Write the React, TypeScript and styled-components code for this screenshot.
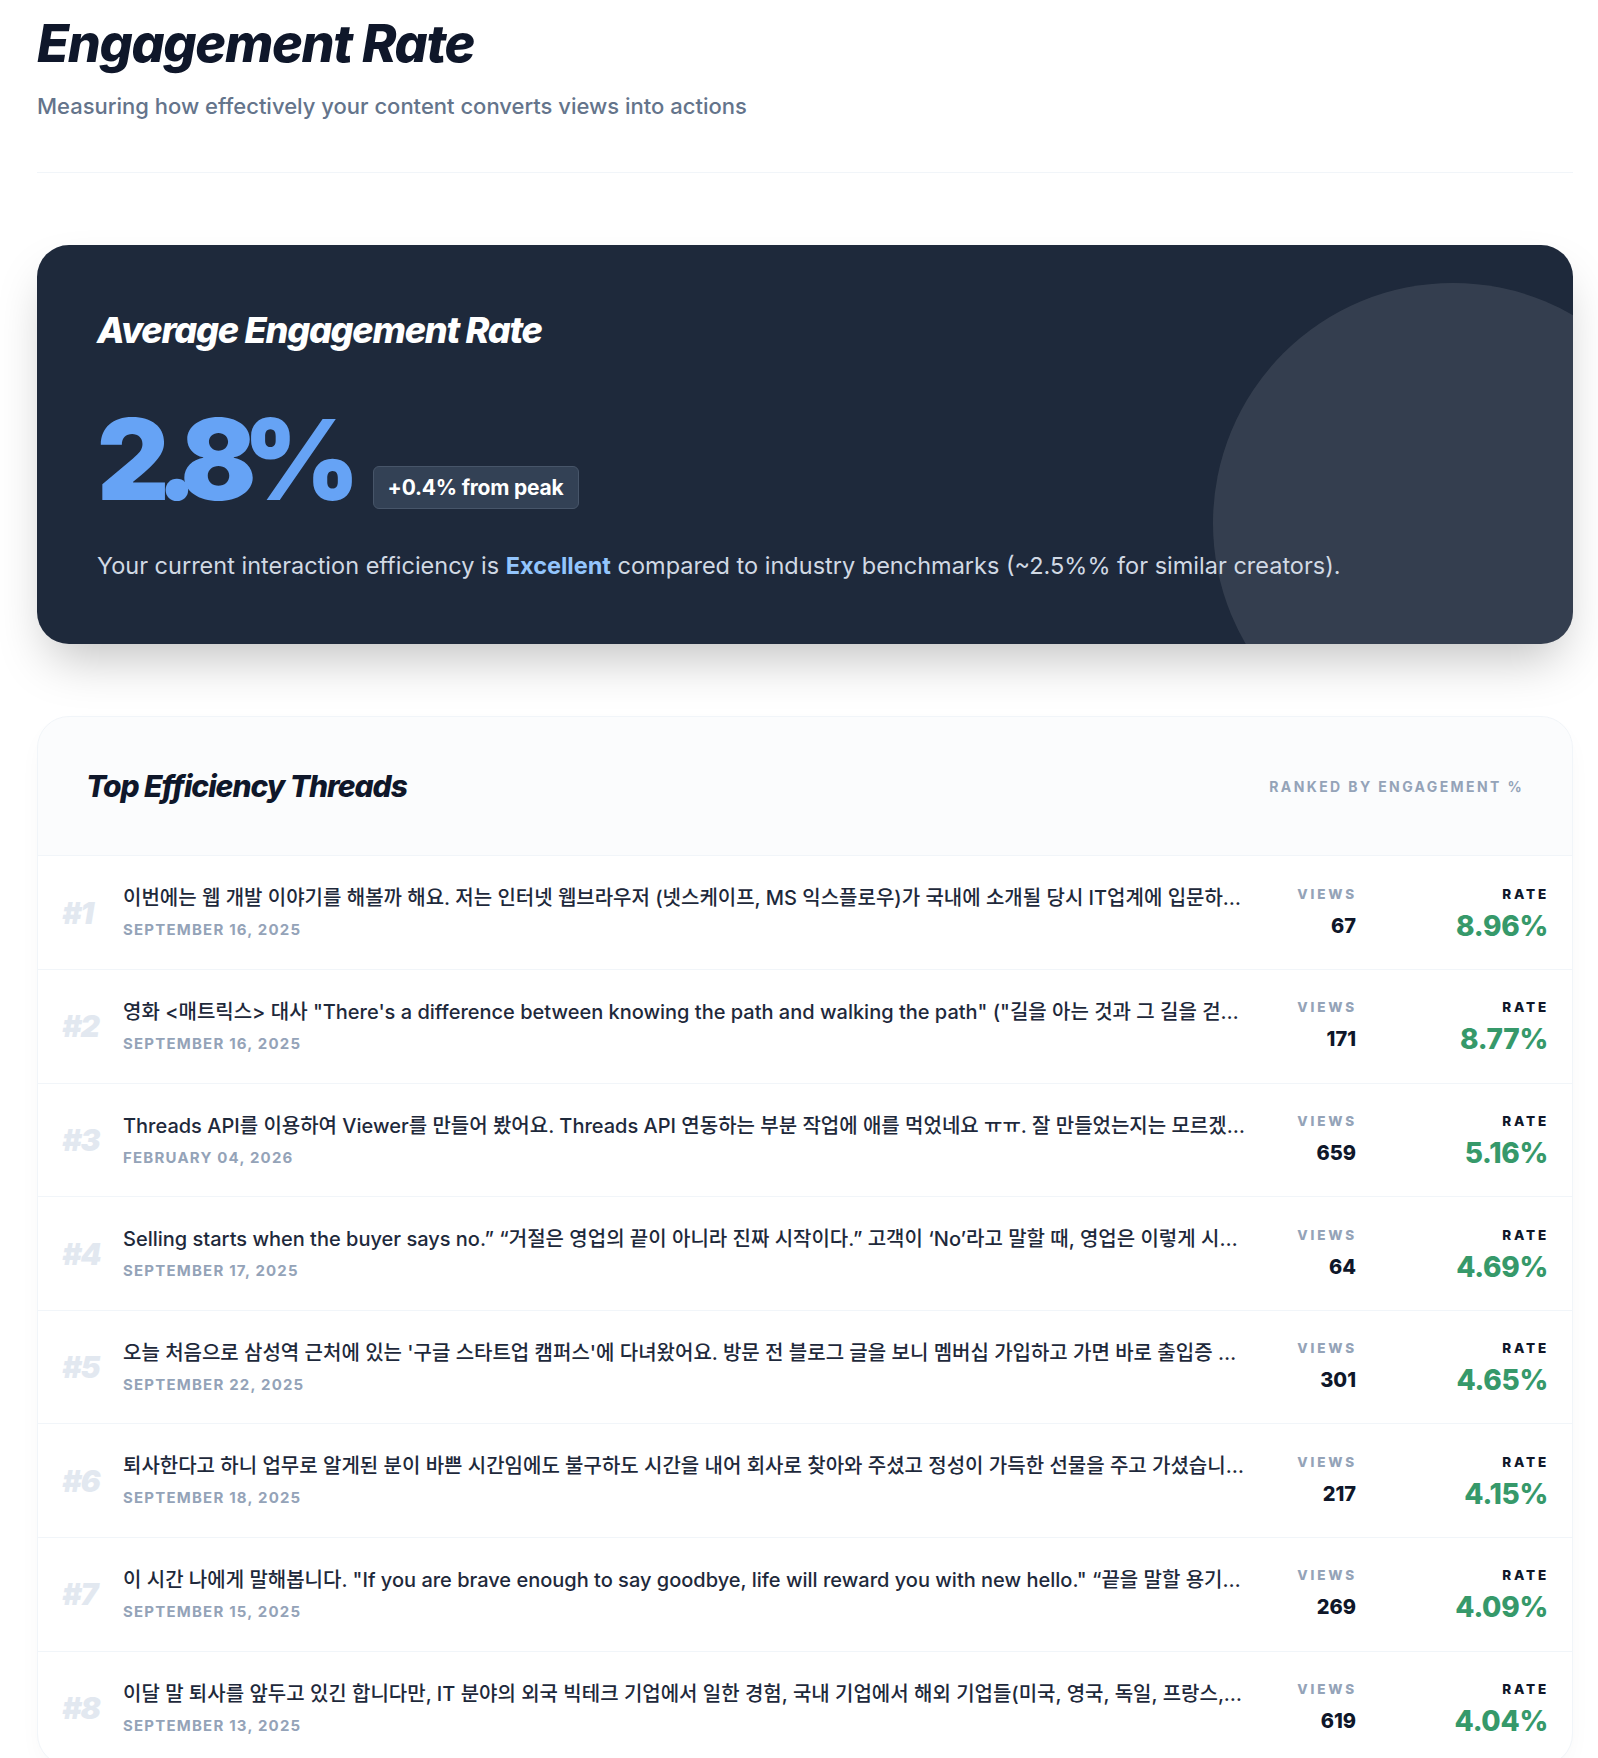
import React from "react";
import styled, { createGlobalStyle } from "styled-components";

const GlobalStyle = createGlobalStyle`
  html, body {
    margin: 0;
    padding: 0;
    background: #ffffff;
  }
  body {
    font-family: Inter, "Noto Sans CJK KR", "Noto Sans", sans-serif;
    color: #0f172a;
    -webkit-font-smoothing: antialiased;
  }
  * { box-sizing: border-box; }
`;

const Page = styled.div`
  padding: 13px 25px 0 37px;
`;

const Header = styled.header`
  padding-bottom: 49px;
  border-bottom: 1px solid #f1f5f9;
`;

const Title = styled.h1`
  margin: 0;
  font-size: 52px;
  line-height: 1.2;
  font-weight: 800;
  font-style: italic;
  letter-spacing: -0.025em;
  color: #0f172a;
`;

const Subtitle = styled.p`
  margin: 15px 0 0;
  font-size: 22px;
  line-height: 1.5;
  font-weight: 500;
  color: #64748b;
`;

const HeroCard = styled.section`
  position: relative;
  overflow: hidden;
  margin-top: 72px;
  padding: 64px 60px 62px;
  border-radius: 32px;
  background: #1e293b;
  box-shadow: 0 25px 50px -12px rgba(0, 0, 0, 0.25);
`;

const Glow = styled.div`
  position: absolute;
  top: 38px;
  right: -120px;
  width: 480px;
  height: 480px;
  border-radius: 50%;
  background: rgba(255, 255, 255, 0.1);
  pointer-events: none;
`;

const HeroTitle = styled.h2`
  position: relative;
  margin: 0;
  font-size: 36px;
  line-height: 1.2;
  font-weight: 800;
  font-style: italic;
  letter-spacing: -0.035em;
  color: #ffffff;
`;

const MetricRow = styled.div`
  position: relative;
  display: flex;
  align-items: flex-end;
  gap: 26px;
  margin-top: 50px;
`;

const BigValue = styled.span`
  font-size: 112px;
  line-height: 1;
  font-weight: 900;
  letter-spacing: -0.12em;
  color: #66a3f5;
`;

const Badge = styled.span`
  display: inline-block;
  margin-bottom: 6px;
  padding: 7px 14px;
  border: 1px solid #475569;
  border-radius: 6px;
  background: #334155;
  font-size: 21px;
  line-height: 27px;
  font-weight: 700;
  letter-spacing: -0.01em;
  color: #ffffff;
`;

const Description = styled.p`
  position: relative;
  margin: 35px 0 0;
  font-size: 23.5px;
  line-height: 1.4;
  font-weight: 400;
  color: #d1d9e4;
`;

const Highlight = styled.strong`
  font-weight: 700;
  color: #93c5fd;
`;

const ListCard = styled.section`
  margin-top: 72px;
  border: 1px solid #f1f5f9;
  border-radius: 32px;
  background: #ffffff;
  overflow: hidden;
  box-shadow: 0 10px 30px -10px rgba(15, 23, 42, 0.06);
`;

const ListHeader = styled.div`
  display: flex;
  align-items: center;
  justify-content: space-between;
  padding: 48px;
  background: rgba(248, 250, 252, 0.5);
  border-bottom: 1px solid #f1f5f9;
`;

const ListTitle = styled.h3`
  margin: 0;
  font-size: 30px;
  line-height: 42px;
  font-weight: 800;
  font-style: italic;
  letter-spacing: -0.035em;
  color: #0f172a;
`;

const Caption = styled.span`
  font-size: 14px;
  font-weight: 700;
  letter-spacing: 0.17em;
  text-transform: uppercase;
  color: #94a3b8;
`;

const Row = styled.div`
  display: grid;
  grid-template-columns: 37px minmax(0, 1fr) 85px 168px;
  column-gap: 24px;
  align-items: center;
  padding: 28px 24px;
  border-bottom: 1px solid #f1f5f9;
`;

const Rank = styled.span`
  font-size: 30px;
  line-height: 1;
  font-weight: 900;
  font-style: italic;
  letter-spacing: -0.05em;
  color: #e2e8f0;
  white-space: nowrap;
`;

const PostBody = styled.div`
  min-width: 0;
  display: flex;
  flex-direction: column;
  gap: 7px;
`;

const PostText = styled.div`
  font-size: 20px;
  line-height: 28px;
  font-weight: 500;
  color: #1e293b;
  white-space: nowrap;
  overflow: hidden;
  text-overflow: ellipsis;
`;

const PostDate = styled.div`
  font-size: 15px;
  line-height: 21.6px;
  font-weight: 700;
  letter-spacing: 0.08em;
  text-transform: uppercase;
  color: #94a3b8;
`;

const Stat = styled.div`
  display: flex;
  flex-direction: column;
  align-items: flex-end;
  gap: 8px;
  text-align: right;
`;

const StatLabel = styled.span<{ $dark?: boolean }>`
  font-size: 13.5px;
  line-height: 18px;
  font-weight: 800;
  letter-spacing: 0.21em;
  margin-right: -0.08em;
  text-transform: uppercase;
  color: ${(p) => (p.$dark ? "#0f172a" : "#94a3b8")};
`;

const StatValue = styled.span<{ $rate?: boolean }>`
  font-size: ${(p) => (p.$rate ? "28px" : "20px")};
  line-height: 30px;
  font-weight: 800;
  letter-spacing: ${(p) => (p.$rate ? "-0.01em" : "0")};
  color: ${(p) => (p.$rate ? "#36996a" : "#0f172a")};
`;

type Thread = {
  text: string;
  date: string;
  views: number;
  rate: string;
};

const threads: Thread[] = [
  {
    text: "이번에는 웹 개발 이야기를 해볼까 해요. 저는 인터넷 웹브라우저 (넷스케이프, MS 익스플로우)가 국내에 소개될 당시 IT업계에 입문하였고, 그 이후로 웹 개발의 변화를 직접 경험해왔습니다.",
    date: "September 16, 2025",
    views: 67,
    rate: "8.96%",
  },
  {
    text: "영화 <매트릭스> 대사 \"There's a difference between knowing the path and walking the path\" (\"길을 아는 것과 그 길을 걷는 것은 다르다\")",
    date: "September 16, 2025",
    views: 171,
    rate: "8.77%",
  },
  {
    text: "Threads API를 이용하여 Viewer를 만들어 봤어요. Threads API 연동하는 부분 작업에 애를 먹었네요 ㅠㅠ. 잘 만들었는지는 모르겠지만 한번 사용해 보세요.",
    date: "February 04, 2026",
    views: 659,
    rate: "5.16%",
  },
  {
    text: "Selling starts when the buyer says no.” “거절은 영업의 끝이 아니라 진짜 시작이다.” 고객이 ‘No’라고 말할 때, 영업은 이렇게 시작됩니다.",
    date: "September 17, 2025",
    views: 64,
    rate: "4.69%",
  },
  {
    text: "오늘 처음으로 삼성역 근처에 있는 '구글 스타트업 캠퍼스'에 다녀왔어요. 방문 전 블로그 글을 보니 멤버십 가입하고 가면 바로 출입증 만들어 준다고 해서 가입하고 갔어요.",
    date: "September 22, 2025",
    views: 301,
    rate: "4.65%",
  },
  {
    text: "퇴사한다고 하니 업무로 알게된 분이 바쁜 시간임에도 불구하도 시간을 내어 회사로 찾아와 주셨고 정성이 가득한 선물을 주고 가셨습니다. 정말 감사합니다.",
    date: "September 18, 2025",
    views: 217,
    rate: "4.15%",
  },
  {
    text: "이 시간 나에게 말해봅니다. \"If you are brave enough to say goodbye, life will reward you with new hello.\" “끝을 말할 용기가 있다면, 삶은 새로운 시작으로 보답할 것이다.”",
    date: "September 15, 2025",
    views: 269,
    rate: "4.09%",
  },
  {
    text: "이달 말 퇴사를 앞두고 있긴 합니다만, IT 분야의 외국 빅테크 기업에서 일한 경험, 국내 기업에서 해외 기업들(미국, 영국, 독일, 프랑스, 일본 등)과 함께 일한 경험을 나눠보려 합니다.",
    date: "September 13, 2025",
    views: 619,
    rate: "4.04%",
  },
];

export default function App() {
  return (
    <>
      <GlobalStyle />
      <Page>
        <Header>
          <Title>Engagement Rate</Title>
          <Subtitle>Measuring how effectively your content converts views into actions</Subtitle>
        </Header>

        <HeroCard>
          <Glow />
          <HeroTitle>Average Engagement Rate</HeroTitle>
          <MetricRow>
            <BigValue>2.8%</BigValue>
            <Badge>+0.4% from peak</Badge>
          </MetricRow>
          <Description>
            Your current interaction efficiency is <Highlight>Excellent</Highlight> compared to
            industry benchmarks (~2.5%% for similar creators).
          </Description>
        </HeroCard>

        <ListCard>
          <ListHeader>
            <ListTitle>Top Efficiency Threads</ListTitle>
            <Caption>Ranked by Engagement %</Caption>
          </ListHeader>
          {threads.map((t, i) => (
            <Row key={i}>
              <Rank>#{i + 1}</Rank>
              <PostBody>
                <PostText>{t.text}</PostText>
                <PostDate>{t.date}</PostDate>
              </PostBody>
              <Stat>
                <StatLabel>Views</StatLabel>
                <StatValue>{t.views}</StatValue>
              </Stat>
              <Stat>
                <StatLabel $dark>Rate</StatLabel>
                <StatValue $rate>{t.rate}</StatValue>
              </Stat>
            </Row>
          ))}
        </ListCard>
      </Page>
    </>
  );
}
